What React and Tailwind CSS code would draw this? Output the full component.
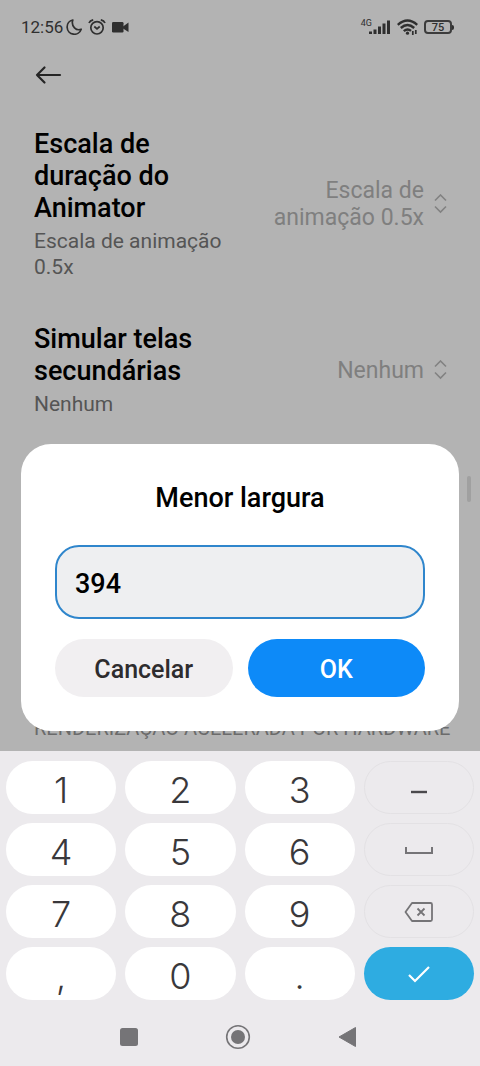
import React, { useState } from "react"

const SETTINGS = [
  {
    id: "animator",
    title: "Escala de duração do Animator",
    summary: "Escala de animação 0.5x",
    value: "Escala de animação 0.5x",
  },
  {
    id: "displays",
    title: "Simular telas secundárias",
    summary: "Nenhum",
    value: "Nenhum",
  },
]

const KEYS = [
  "1", "2", "3", "minus",
  "4", "5", "6", "space",
  "7", "8", "9", "backspace",
  ",", "0", ".", "enter",
]

const ACTIONS = {
  minus: {
    label: "Menos",
    icon: <path d="M8 20h16" stroke="#4a494c" strokeWidth="2.4" />,
  },
  space: {
    label: "Espaço",
    icon: <path d="M3 13v6h26v-6" stroke="#757477" strokeWidth="2" />,
  },
  backspace: {
    label: "Apagar",
    icon: (
      <g stroke="#757477" strokeWidth="1.8" strokeLinejoin="round">
        <path d="M9 7h18.5q1.5 0 1.5 1.5v15q0 1.500-1.500 1.500H9L2.500 16z" />
        <path d="M14.500 12.500l7 7M21.500 12.500l-7 7" />
      </g>
    ),
  },
  enter: {
    label: "Confirmar",
    icon: <path d="M6 17l6 6L26 9" stroke="#fff" strokeWidth="2.2" />,
  },
}

function StatusBar() {
  return (
    <div className="flex h-[54px] items-center justify-between pl-[21px] pr-[26px] text-[#2f2f2f]">
      <div className="flex items-center gap-[3px]">
        <span className="text-[17px] leading-5">12:56</span>
        <svg className="size-4" viewBox="0 0 16 16" fill="none" stroke="currentColor" strokeWidth="1.700" strokeLinejoin="round">
          <path d="M6.800 1A7.200 7.200 0 1 0 15.200 10.200Q11.500 11.800 8.500 8.800Q5.300 5.500 6.800 1z" />
        </svg>
        <svg className="ml-[3px] h-4 w-[18px]" viewBox="0 0 18 16" fill="none" stroke="currentColor" strokeWidth="1.700">
          <circle cx="9" cy="8.800" r="6.200" />
          <path d="M1 4Q2 1.500 5.200.8M17 4Q16 1.500 12.800.8M6.300 7.500L9 9.800l2.700-2.300" />
        </svg>
        <svg className="ml-[3px] h-4 w-[17px]" viewBox="0 0 17 16" fill="currentColor">
          <rect x="0" y="3" width="11.500" height="10.500" rx="1.200" />
          <path d="M11 7.500l5.500-4v9.500L11 9.500z" />
        </svg>
      </div>
      <div className="flex items-center gap-1.5">
        <div className="flex items-start">
          <span className="text-[9px] leading-[9px]">4G</span>
          <svg className="-ml-1 h-4 w-[23px]" viewBox="0 0 23 16" stroke="currentColor" strokeWidth="3">
            <path d="M2.500 12.500V15M7 10.500V15M11.500 7.500V15M16 4.500V15M20.500 1.500V15" />
          </svg>
        </div>
        <svg className="h-4 w-[21px]" viewBox="0 0 21 16" fill="none" stroke="currentColor" strokeWidth="2.400">
          <path d="M.8 5.800Q10.500-2.800 20.200 5.800M3.800 9Q10.500 3 17.200 9M6.800 12.200Q10.500 8.800 14 11.800" />
          <circle cx="10.500" cy="14.200" r="1.600" fill="currentColor" stroke="none" />
          <path d="M15.800 12v4M18.800 11v4" strokeWidth="1.700" />
        </svg>
        <div className="flex items-center">
          <span className="flex h-[14px] w-7 items-center justify-center rounded-[4px] border-2 border-[#3c3c3c] text-[11px] leading-none font-medium">
            75
          </span>
          <span className="h-[5px] w-[2px] rounded-r-sm bg-current" />
        </div>
      </div>
    </div>
  )
}

function SettingRow({ title, summary, value }) {
  return (
    <button type="button" className="flex w-full items-center text-left">
      <span className="w-1/2">
        <span className="block text-[27px] leading-8 font-medium text-black">{title}</span>
        <span className="mt-1 block text-[21px] leading-[26px] text-[#555]">{summary}</span>
      </span>
      <span className="flex flex-1 items-center justify-end gap-2.5">
        <span className="text-right text-[23px] leading-[27px] text-[#7f7f7f]">{value}</span>
        <svg className="h-5 w-[13px] shrink-0" viewBox="0 0 13 20" fill="none" stroke="#828282" strokeWidth="1.600">
          <path d="M1 6.500L6.500 1 12 6.500M1 12.500L6.500 18l5.500-5.500" />
        </svg>
      </span>
    </button>
  )
}

function WidthDialog({ value, onChange }) {
  return (
    <div
      role="dialog"
      aria-labelledby="dialog-title"
      className="absolute inset-x-[21px] bottom-5 rounded-[30px] bg-white px-[34px] pt-[38px] pb-[34px]"
    >
      <h2 id="dialog-title" className="text-center text-[27px] leading-8 font-medium text-black">
        Menor largura
      </h2>
      <input
        type="text"
        inputMode="numeric"
        aria-labelledby="dialog-title"
        value={value}
        onChange={(e) => onChange(e.target.value)}
        className="mt-[31px] block h-[74px] w-full rounded-3xl border-2 border-[#2f86cc] bg-[#eeeff1] px-[18px] pt-1 text-[27px] font-medium text-black outline-none"
      />
      <div className="mt-5 grid grid-cols-2 gap-[15px] text-[25px] font-medium">
        <button type="button" className="h-[58px] rounded-full bg-[#f1eff1] pt-1 text-[#2e2c2e]">
          Cancelar
        </button>
        <button type="button" className="h-[58px] rounded-full bg-[#0d8af8] pt-1 text-white">
          OK
        </button>
      </div>
    </div>
  )
}

function Key({ name, onPress }) {
  const action = ACTIONS[name]

  if (!action) {
    return (
      <button
        type="button"
        onClick={() => onPress(name)}
        className="flex h-[53px] items-center justify-center rounded-full bg-white pt-1 font-['Inter',sans-serif] text-[36px] leading-none font-light text-[#39383b]"
      >
        {name}
      </button>
    )
  }

  return (
    <button
      type="button"
      aria-label={action.label}
      onClick={() => onPress(name)}
      className={`flex h-[53px] items-center justify-center rounded-full ${
        name === "enter" ? "bg-[#2eace1]" : "border border-[#e3e1e4]"
      }`}
    >
      <svg className="size-8" viewBox="0 0 32 32" fill="none">
        {action.icon}
      </svg>
    </button>
  )
}

function NavBar() {
  return (
    <nav className="flex h-[66px] items-center justify-center gap-[83px] pt-2 pr-1">
      <button type="button" aria-label="Recentes">
        <svg className="size-[26px]" viewBox="0 0 26 26" fill="#757477">
          <rect x="4" y="4" width="18" height="18" rx="2.500" />
        </svg>
      </button>
      <button type="button" aria-label="Início">
        <svg className="size-[26px]" viewBox="0 0 26 26" fill="#757477">
          <circle cx="13" cy="13" r="11.300" fill="none" stroke="#757477" strokeWidth="1.600" />
          <circle cx="13" cy="13" r="7" />
        </svg>
      </button>
      <button type="button" aria-label="Voltar">
        <svg className="size-[26px]" viewBox="0 0 26 26" fill="#757477">
          <path d="M21.500 3.500v19L5 13z" stroke="#757477" strokeWidth="1" strokeLinejoin="round" />
        </svg>
      </button>
    </nav>
  )
}

export default function App() {
  const [width, setWidth] = useState("394")

  const handleKey = (name) => {
    if (name === "enter") {
      return
    }
    if (name === "backspace") {
      setWidth(width.slice(0, -1))
      return
    }
    const chars = { minus: "-", space: " " }
    setWidth(width + (chars[name] ?? name))
  }

  return (
    <div className="flex min-h-screen flex-col bg-[#b3b3b3] font-['Roboto',sans-serif]">
      <div className="relative flex flex-1 flex-col">
        <StatusBar />
        <header className="px-[34px] pt-1.5">
          <button type="button" aria-label="Voltar" className="block">
            <svg className="h-[30px] w-7" viewBox="0 0 28 30" fill="none" stroke="#252525" strokeWidth="2.200" strokeLinecap="round" strokeLinejoin="round">
              <path d="M26 15H3M10.500 7.500L3 15l7.500 7.500" />
            </svg>
          </button>
        </header>

        <main className="flex flex-1 flex-col pt-[38px] pr-[33px] pb-2.5 pl-[34px]">
          <div className="space-y-[43px]">
            {SETTINGS.map((item) => (
              <SettingRow key={item.id} {...item} />
            ))}
          </div>
          <h3 className="mt-auto text-[20px] leading-[26px] whitespace-nowrap text-[#6b6b6b]">
            RENDERIZAÇÃO ACELERADA POR HARDWARE
          </h3>
        </main>

        {/* Scroll thumb */}
        <div className="absolute right-[9px] bottom-[249px] h-[26px] w-1 rounded-full bg-[#a0a0a0]" />

        <WidthDialog value={width} onChange={setWidth} />
      </div>

      {/* Numeric keyboard */}
      <div className="bg-[#eceaed]">
        <div className="grid grid-cols-4 gap-[9px] px-1.5 pt-2.5">
          {KEYS.map((name) => (
            <Key key={name} name={name} onPress={handleKey} />
          ))}
        </div>
        <NavBar />
      </div>
    </div>
  )
}
